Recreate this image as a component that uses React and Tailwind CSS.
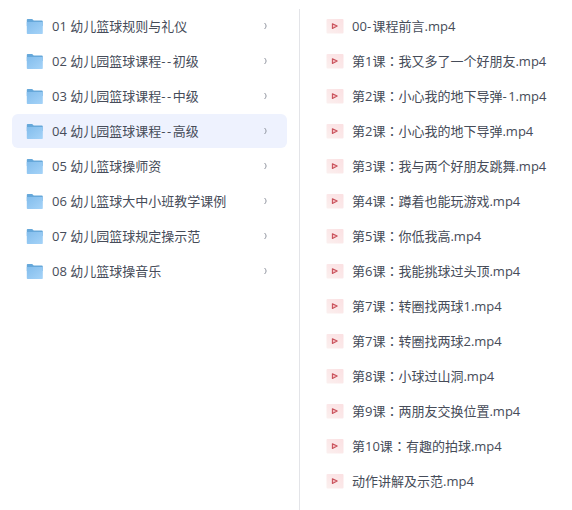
import React, { useState } from 'react';

const folders = [
  '01 幼儿篮球规则与礼仪',
  '02 幼儿园篮球课程--初级',
  '03 幼儿园篮球课程--中级',
  '04 幼儿园篮球课程--高级',
  '05 幼儿篮球操师资',
  '06 幼儿篮球大中小班教学课例',
  '07 幼儿园篮球规定操示范',
  '08 幼儿篮球操音乐',
];

const videos = [
  '00-课程前言.mp4',
  '第1课：我又多了一个好朋友.mp4',
  '第2课：小心我的地下导弹-1.mp4',
  '第2课：小心我的地下导弹.mp4',
  '第3课：我与两个好朋友跳舞.mp4',
  '第4课：蹲着也能玩游戏.mp4',
  '第5课：你低我高.mp4',
  '第6课：我能挑球过头顶.mp4',
  '第7课：转圈找两球1.mp4',
  '第7课：转圈找两球2.mp4',
  '第8课：小球过山洞.mp4',
  '第9课：两朋友交换位置.mp4',
  '第10课：有趣的拍球.mp4',
  '动作讲解及示范.mp4',
];

const FolderIcon = () => (
  <svg width="18" height="16" viewBox="0 0 18 16" className="shrink-0">
    <defs>
      <linearGradient id="folder" x1="0" y1="0" x2="1" y2="1">
        <stop offset="0" stopColor="#83bdec" />
        <stop offset="1" stopColor="#a5d3f8" />
      </linearGradient>
    </defs>
    <path d="M.8 1.800c0-.5.300-.8.800-.8h4.600l1.500 1.500h8.100c.6 0 1 .3 1 .9V8H.8z" fill="#66a8da" />
    <path d="M.8 4h16v11.200c0 .4-.3.700-.7.700H1.500c-.4 0-.7-.3-.7-.7z" fill="url(#folder)" />
  </svg>
);

const VideoIcon = () => (
  <svg width="18" height="16" viewBox="0 0 18 16" className="shrink-0">
    <defs>
      <linearGradient id="video" x1="0" y1="1" x2="1" y2="0">
        <stop offset="0" stopColor="#fbf0ef" />
        <stop offset="1" stopColor="#fbe0e2" />
      </linearGradient>
    </defs>
    <rect x="0.500" y="1" width="17" height="14.500" rx="1" fill="url(#video)" />
    <path d="M6.400 5.800v4.600l4.800-2.300z" fill="#f6c3c6" stroke="#c9525c" strokeWidth="1.100" strokeLinejoin="round" />
  </svg>
);

// Hyphens get a little extra width, full-width colons sit centred in their box.
const Label = ({ text }) => (
  <span className="ml-2 flex-1 whitespace-nowrap">
    {text.split(/(-+|：)/).map((part, i) => {
      if (part === '：') return <span key={i} className="font-['Noto_Sans_CJK_TC',sans-serif]" lang="zh-TW">{part}</span>;
      if (part.startsWith('-')) return <span key={i} className="tracking-[1.5px]">{part}</span>;
      return part;
    })}
  </span>
);

export default function App() {
  const [active, setActive] = useState(3);

  return (
    <div className="flex h-[510px] w-[572px] overflow-hidden bg-white font-['Open_Sans','Noto_Sans_CJK_SC',sans-serif] text-[13px] leading-5 text-[#464c59]">
      <div className="flex w-[299px] flex-col pt-[9px] pl-3">
        {folders.map((name, i) => (
          <div key={name} className="h-[35px]">
            <button
              onClick={() => setActive(i)}
              className={`flex h-[34px] w-[275px] items-center rounded-md pr-[19px] pl-3.5 text-left ${i === active ? 'bg-[#eef2fe]' : ''}`}
            >
              <FolderIcon />
              <Label text={name} />
              <svg width="5" height="8" viewBox="0 0 5 8" fill="none" stroke="#858b96">
                <path d="M1.500 1c2 2 2 4 0 6" />
              </svg>
            </button>
          </div>
        ))}
      </div>
      <div className="mt-[9px] w-px bg-[#e3e4e8]" />
      <div className="flex flex-col pt-[9px] pl-[26px]">
        {videos.map((name) => (
          <div key={name} className="flex h-[35px] items-center pb-px">
            <VideoIcon />
            <Label text={name} />
          </div>
        ))}
      </div>
    </div>
  );
}
